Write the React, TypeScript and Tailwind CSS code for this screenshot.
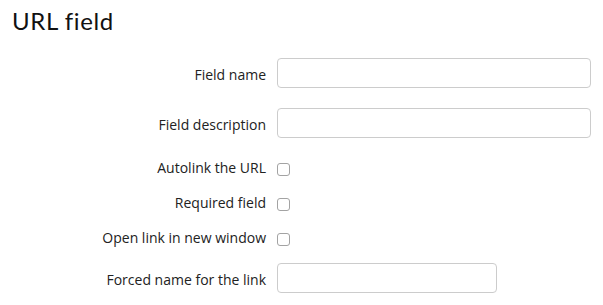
import React from "react";

const labelCls =
  "w-[266px] shrink-0 text-right text-[14px] leading-[20px] text-[#222]";

function TextRow({ label, inputW }: { label: string; inputW: string }) {
  return (
    <div className="flex items-start h-[30px]">
      <label className={labelCls + " pt-[7px]"}>{label}</label>
      <input
        type="text"
        className={
          "ml-[11px] h-[30px] rounded-[4px] border border-[#cccccc] bg-white outline-none " +
          inputW
        }
      />
    </div>
  );
}

function CheckRow({ label }: { label: string }) {
  return (
    <div className="flex items-start h-[20px]">
      <label className={labelCls}>{label}</label>
      <input
        type="checkbox"
        className="ml-[11px] mt-[5px] h-[13px] w-[13px] appearance-none rounded-[3px] border border-[#a3a3a3] bg-white"
      />
    </div>
  );
}

export default function App() {
  return (
    <div className="w-[603px] h-[305px] bg-white font-['Open_Sans',sans-serif] overflow-hidden">
      <h1 className="pt-[9px] pl-[12px] h-[34px] text-[24px] leading-[24px] tracking-[0.6px] text-[#111] font-['Lato',sans-serif] font-normal">
        URL field
      </h1>
      <div className="mt-[24px] flex flex-col">
        <TextRow label="Field name" inputW="w-[314px]" />
        <div className="h-[20px]" />
        <TextRow label="Field description" inputW="w-[314px]" />
        <div className="h-[20px]" />
        <CheckRow label="Autolink the URL" />
        <div className="h-[15px]" />
        <CheckRow label="Required field" />
        <div className="h-[15px]" />
        <CheckRow label="Open link in new window" />
        <div className="h-[15px]" />
        <TextRow label="Forced name for the link" inputW="w-[220px]" />
      </div>
    </div>
  );
}
